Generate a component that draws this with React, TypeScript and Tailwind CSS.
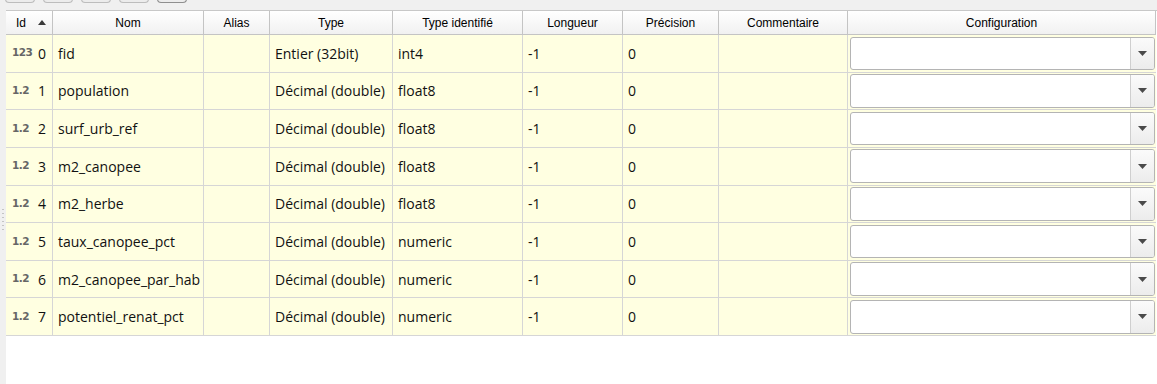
import React from 'react';

type Field = { id: number; kind: 'int' | 'dec'; name: string; type: string; ident: string };

const fields: Field[] = [
  { id: 0, kind: 'int', name: 'fid', type: 'Entier (32bit)', ident: 'int4' },
  { id: 1, kind: 'dec', name: 'population', type: 'Décimal (double)', ident: 'float8' },
  { id: 2, kind: 'dec', name: 'surf_urb_ref', type: 'Décimal (double)', ident: 'float8' },
  { id: 3, kind: 'dec', name: 'm2_canopee', type: 'Décimal (double)', ident: 'float8' },
  { id: 4, kind: 'dec', name: 'm2_herbe', type: 'Décimal (double)', ident: 'float8' },
  { id: 5, kind: 'dec', name: 'taux_canopee_pct', type: 'Décimal (double)', ident: 'numeric' },
  { id: 6, kind: 'dec', name: 'm2_canopee_par_hab', type: 'Décimal (double)', ident: 'numeric' },
  { id: 7, kind: 'dec', name: 'potentiel_renat_pct', type: 'Décimal (double)', ident: 'numeric' },
];

const headers = ['Nom', 'Alias', 'Type', 'Type identifié', 'Longueur', 'Précision', 'Commentaire', 'Configuration'];

const cols = 'grid grid-cols-[47px_151px_66px_123px_130px_100px_96px_129px_308px]';

const Cell: React.FC<{ children?: React.ReactNode; className?: string }> = ({ children, className = '' }) => (
  <div className={`h-[37.625px] border-r border-b border-[#d6d6d6] bg-[#ffffe1] flex items-center px-[5px] text-[14px] text-[#111] whitespace-nowrap overflow-hidden ${className}`}>
    {children}
  </div>
);

const Combo: React.FC = () => (
  <div className="h-[37.625px] border-b border-[#d6d6d6] bg-[#ffffe1] pl-[2px] pr-[1px] py-[1.5px]">
    <div className="h-full flex bg-white border border-[#b4b4b4] rounded-[3px] overflow-hidden">
      <div className="flex-1" />
      <div className="w-[24px] border-l border-[#cfcfcf] bg-gradient-to-b from-[#fbfbfb] to-[#ececec] flex items-center justify-center">
        <svg width="9" height="5" viewBox="0 0 9 5"><path d="M0 0h9L4.5 5z" fill="#4a4a4a" /></svg>
      </div>
    </div>
  </div>
);

export default function App() {
  return (
    <div className="w-[1157px] h-[384px] bg-[#f0f0f0] flex flex-col overflow-hidden" style={{ fontFamily: '"Open Sans", "Liberation Sans", sans-serif' }}>
      {/* toolbar remnants */}
      <div className="h-[10px] flex gap-[8px] pl-[5px] items-start">
        {[0, 1, 2, 3, 4].map((i) => (
          <div key={i} className={`w-[30px] h-[4px] -mt-[1px] rounded-b-[4px] border border-t-0 bg-[#ececec] ${i === 4 ? 'border-[#8f8f8f]' : 'border-[#bdbdbd]'}`} />
        ))}
      </div>
      <div className="flex flex-1">
        <div className="w-[6px] flex flex-col items-center justify-center gap-[3px] pt-[44px]">
          {[0, 1, 2, 3, 4, 5].map((i) => (
            <div key={i} className="w-[2px] h-[1px] bg-[#c4c4c4]" />
          ))}
        </div>
        <div className="flex-1 bg-white border-t border-[#c8c8c8]">
          <div className={cols} >
            <div className="h-[24px] border-r border-b border-[#c4c4c4] bg-gradient-to-b from-white to-[#f1f1f1] flex items-center pl-[10px] gap-[12px] text-[12px] text-black font-['Liberation_Sans',sans-serif]">
              Id
              <svg width="8" height="5" viewBox="0 0 8 5"><path d="M4 0L8 5H0z" fill="#3a3a3a" /></svg>
            </div>
            {headers.map((h) => (
              <div key={h} className="h-[24px] border-r border-b border-[#c4c4c4] bg-gradient-to-b from-white to-[#f1f1f1] flex items-center justify-center text-[12px] text-black font-['Liberation_Sans',sans-serif]">
                {h}
              </div>
            ))}
            {fields.map((f) => (
              <React.Fragment key={f.id}>
                <Cell className="pl-[6px] gap-[7px]">
                  <span className="w-[19px] text-[10.5px] font-bold text-[#666] font-['DejaVu_Sans',sans-serif] tracking-[-0.5px]">{f.kind === 'int' ? '123' : '1.2'}</span>
                  <span>{f.id}</span>
                </Cell>
                <Cell>{f.name}</Cell>
                <Cell />
                <Cell>{f.type}</Cell>
                <Cell>{f.ident}</Cell>
                <Cell>-1</Cell>
                <Cell>0</Cell>
                <Cell />
                <Combo />
              </React.Fragment>
            ))}
          </div>
        </div>
      </div>
    </div>
  );
}
